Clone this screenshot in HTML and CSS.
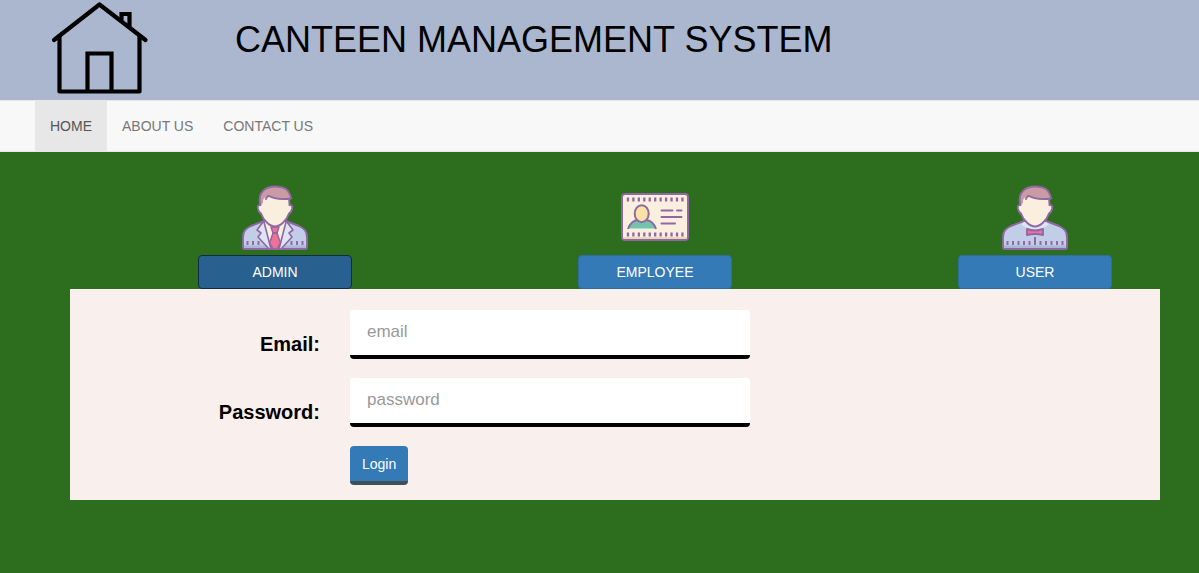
FILE: index.html
```html
<!DOCTYPE html>
<html lang="en">
<head>
<meta charset="utf-8">
<meta name="viewport" content="width=device-width, initial-scale=1">
<title>Canteen Management System</title>
<link rel="stylesheet" href="styles.css">
</head>
<body>
<header class="banner">
  <svg class="logo" viewBox="0 0 100 100" fill="none" stroke="#000" stroke-width="4.200" stroke-linecap="round" stroke-linejoin="round" aria-hidden="true">
    <path d="M4 40 49.500 4.500 95.500 40"/>
    <path d="M9.500 36V91.500H89.500V36"/>
    <path d="M37.500 91V53.500H61.500V91" stroke-linejoin="miter"/>
    <path d="M71.500 20V14H79.500V27" stroke-linejoin="miter" stroke-linecap="butt"/>
  </svg>
  <h1 class="title">CANTEEN MANAGEMENT SYSTEM</h1>
</header>
<nav class="nav">
  <a class="nav-link active" href="#home">HOME</a>
  <a class="nav-link" href="#about">ABOUT US</a>
  <a class="nav-link" href="#contact">CONTACT US</a>
</nav>
<main class="content">
  <div class="roles">
    <div class="role">
      <svg class="role-icon" viewBox="0 0 80 75" stroke="#9068a4" stroke-width="1.900" stroke-linejoin="round" stroke-linecap="round" aria-hidden="true">
        <path fill="#c2cde8" d="M8 67V57C8 51 11 48.500 16 46L29 41H51L64 46C69 48.500 72 51 72 57V67Q72 69 70 69H10Q8 69 8 67Z"/>
        <path fill="#a9b8d5" stroke="none" d="M9 65.500H71V68H9Z"/>
        <path fill="#faefde" stroke="none" d="M29 42 36 68H44L51 42Z"/>
        <path fill="#dde4f3" stroke-width="1.600" d="M28 42 22 50 26 53 23 57 34 69H36L29 42ZM52 42 58 50 54 53 57 57 46 69H44L51 42Z"/>
        <path fill="#ef7196" stroke-width="1.500" d="M36 47H44L42 53 45.500 63 42 69H38L34.500 63 38 53Z"/>
        <path fill="none" d="M38 53H42"/>
        <path fill="#faefde" d="M26 18 25.500 25Q22 24.500 23 29 24 33 26 33.500C28 40 35 46.500 40 46.500S52 40 54 33.500Q56 33 57 29 58 24.500 54.500 25L54 17 32 12Z"/>
        <path fill="#cb9ba5" stroke="none" d="M26 24C22 11 32 6.500 40 6.500 50 6.500 55 10 56.500 19Q43 21 34 16.500 31 15 28 20V23Z"/>
        <path fill="none" d="M25 24C22.500 11 32 6.500 40 6.500 50 6.500 54.500 10 56 18.500Q43 20.500 34 16Q32 16 31 19"/>
        <path stroke-width="2" stroke-linecap="butt" d="M12.500 61V65M18 61V65M23.500 61V65M56.500 61V65M62 61V65M67.500 61V65"/>
      </svg>
      <button class="btn role-btn selected" type="button">ADMIN</button>
    </div>
    <div class="role">
      <svg class="role-icon" viewBox="0 0 80 75" stroke="#9068a4" stroke-width="2" stroke-linecap="round" aria-hidden="true">
        <rect x="7" y="14" width="66" height="46" rx="3" fill="#faefde"/>
        <path stroke="#eed7b8" d="M9 58H71"/>
        <path fill="none" stroke-width="4" stroke-linecap="butt" stroke-dasharray="2.300 3.150" d="M11.800 19.500H70M11.800 54.500H70"/>
        <path fill="#74c4ac" stroke="none" d="M13 48.500Q16 40 23 40H31Q38 40 41 48.500Z"/>
        <path fill="none" stroke-linecap="butt" d="M13 49Q16 40.500 23 40H31Q38 40.500 41 49"/>
        <ellipse cx="26.700" cy="33.700" rx="7" ry="8.500" fill="#fae2a6"/>
        <path d="M46.500 30.500H57.500M62 30.500H66.500M46.500 37H66.500M46.500 43.500H60"/>
      </svg>
      <button class="btn role-btn" type="button">EMPLOYEE</button>
    </div>
    <div class="role">
      <svg class="role-icon" viewBox="0 0 80 75" stroke="#9068a4" stroke-width="1.900" stroke-linejoin="round" stroke-linecap="round" aria-hidden="true">
        <path fill="#c2cde8" d="M8 67V57C8 51 11 48.500 16 46L29 41H51L64 46C69 48.500 72 51 72 57V67Q72 69 70 69H10Q8 69 8 67Z"/>
        <path fill="#a9b8d5" stroke="none" d="M9 65.500H71V68H9Z"/>
        <path fill="#dde4f3" stroke="none" d="M29 42 26 44.500Q40 54 54 44.500L51 42Z"/>
        <path fill="#faefde" d="M26 18 25.500 25Q22 24.500 23 29 24 33 26 33.500C28 40 35 46.500 40 46.500S52 40 54 33.500Q56 33 57 29 58 24.500 54.500 25L54 17 32 12Z"/>
        <path fill="#cb9ba5" stroke="none" d="M26 24C22 11 32 6.500 40 6.500 50 6.500 55 10 56.500 19Q43 21 34 16.500 31 15 28 20V23Z"/>
        <path fill="none" d="M25 24C22.500 11 32 6.500 40 6.500 50 6.500 54.500 10 56 18.500Q43 20.500 34 16Q32 16 31 19"/>
        <path fill="#ef7196" d="M32 49Q40 52 48 49V55Q40 53 32 55Z"/>
        <path stroke-width="2" stroke-linecap="butt" d="M12.500 61V65M18 61V65M23.500 61V65M29 61V65M34.500 61V65M40 57V65M45.500 61V65M51 61V65M56.500 61V65M62 61V65M67.500 61V65"/>
      </svg>
      <button class="btn role-btn" type="button">USER</button>
    </div>
  </div>
  <form class="panel">
    <label class="label" for="email">Email:</label>
    <input class="field" id="email" type="email" placeholder="email">
    <label class="label" for="password">Password:</label>
    <input class="field" id="password" type="password" placeholder="password">
    <button class="btn login" type="button">Login</button>
  </form>
</main>
</body>
</html>
```
FILE: styles.css
```css
* {
  box-sizing: border-box;
}

body {
  margin: 0;
  min-height: 100vh;
  background: #2d6d1e;
  color: #000;
  font: 14px/20px "Liberation Sans", Arial, sans-serif;
}

.banner {
  display: flex;
  align-items: flex-start;
  gap: 85px;
  padding-left: 50px;
  background: #abb7cf;
}

.logo {
  flex: none;
  width: 100px;
  height: 100px;
}

.title {
  margin: 20px 0 0;
  font-size: 36px;
  font-weight: 400;
  line-height: 40px;
}

.nav {
  display: flex;
  padding-left: 35px;
  background: #f8f8f8;
  border: solid #e7e7e7;
  border-width: 1px 0;
}

.nav-link {
  padding: 15px;
  color: #777;
  text-decoration: none;
}

.nav-link.active {
  background: #e7e7e7;
  color: #555;
}

.content {
  padding: 28px 39px 0 70px;
}

.roles {
  display: flex;
  justify-content: space-between;
  padding: 0 48px 0 128px;
}

.role {
  display: flex;
  flex-direction: column;
  align-items: center;
}

.role-icon {
  width: 80px;
  height: 75px;
}

.btn {
  padding: 6px 12px;
  border: 1px solid #2e6da4;
  border-radius: 4px;
  background: #337ab7;
  color: #fff;
  font: inherit;
  cursor: pointer;
}

.role-btn {
  width: 154px;
}

.role-btn.selected {
  background: #286090;
  border-color: #122b40;
}

.panel {
  display: grid;
  grid-template-columns: 250px minmax(0, 400px);
  gap: 19px 30px;
  padding: 21px 0 15px;
  background: #f9efec;
}

.label {
  padding-top: 22px;
  font-size: 20px;
  font-weight: 700;
  line-height: 24px;
  text-align: right;
}

.field {
  width: 100%;
  height: 49px;
  padding: 0 17px 2px;
  border: 0 solid #000;
  border-bottom-width: 4px;
  border-radius: 4px;
  background: #fff;
  color: #000;
  font: inherit;
  font-size: 17px;
}

.field::placeholder {
  color: #999;
  opacity: 1;
}

.login {
  grid-column: 2;
  justify-self: start;
  height: 39px;
  padding: 0 12px;
  border-width: 0 0 4px;
  border-color: #3f505a;
}
```
